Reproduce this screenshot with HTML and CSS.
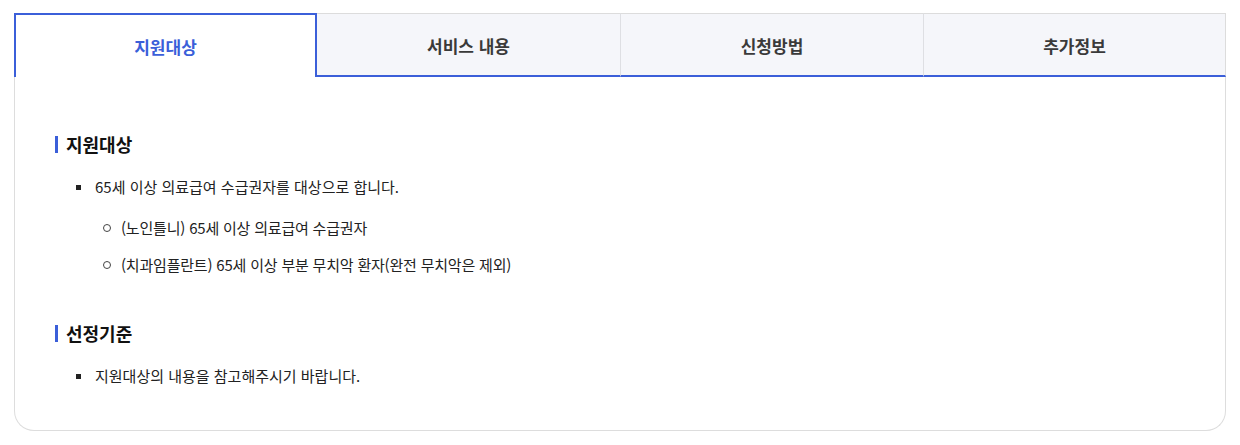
FILE: index.html
```html
<!DOCTYPE html>
<html lang="ko">
<head>
<meta charset="utf-8">
<link rel="stylesheet" href="styles.css">
</head>
<body>
<div class="wrap">
  <ul class="tabs">
    <li class="tab active">지원대상</li>
    <li class="tab">서비스 내용</li>
    <li class="tab">신청방법</li>
    <li class="tab last">추가정보</li>
  </ul>
  <div class="panel">
    <h3 class="title">지원대상</h3>
    <ul class="list">
      <li class="item">65세 이상 의료급여 수급권자를 대상으로 합니다.</li>
    </ul>
    <ul class="sublist">
      <li class="subitem">(노인틀니) 65세 이상 의료급여 수급권자</li>
      <li class="subitem">(치과임플란트) 65세 이상 부분 무치악 환자(완전 무치악은 제외)</li>
    </ul>
    <h3 class="title second">선정기준</h3>
    <ul class="list">
      <li class="item">지원대상의 내용을 참고해주시기 바랍니다.</li>
    </ul>
  </div>
</div>
</body>
</html>
```

FILE: styles.css
```css
* { box-sizing: border-box; }
html, body { margin: 0; padding: 0; background: #fff; }
body {
  font-family: "Noto Sans CJK KR", "Noto Sans", sans-serif;
  color: #222;
}
.wrap {
  padding: 13px 14px 0 14px;
  width: 1240px;
}
.tabs {
  list-style: none;
  margin: 0;
  padding: 0;
  display: grid;
  grid-template-columns: repeat(4, 1fr);
  height: 64px;
}
.tab {
  display: flex;
  align-items: center;
  justify-content: center;
  background: #f5f6fa;
  border-top: 1px solid #dcdcdc;
  border-left: 1px solid #dedfe3;
  border-bottom: 2px solid #3b5fd9;
  font-size: 17px;
  font-weight: 700;
  color: #3a3a3a;
  padding-top: 2px;
}
.tab.last { border-right: 1px solid #dcdcdc; }
.tab.active {
  background: #fff;
  border: 2px solid #3b5fd9;
  border-bottom: none;
  color: #3b5fd9;
  padding-top: 0;
}
.tab.active + .tab { border-left: none; }
.panel {
  border: 1px solid #dddddd;
  border-top: none;
  border-radius: 0 0 20px 20px;
  padding: 54px 40px 39px 40px;
  height: 354px;
}
.title {
  margin: 0;
  font-size: 18px;
  font-weight: 700;
  line-height: 26px;
  color: #111;
  display: flex;
  align-items: center;
  gap: 8px;
}
.title::before {
  content: "";
  width: 3px;
  height: 17px;
  background: #3b5fd9;
}
.title.second { margin-top: 43px; }
.list, .sublist {
  list-style: none;
  margin: 0;
  padding: 0;
}
.list { margin-top: 18px; margin-left: 21px; }
.item {
  display: flex;
  align-items: center;
  font-size: 15px;
  line-height: 24px;
  color: #222;
}
.item::before {
  content: "";
  width: 5px;
  height: 5px;
  background: #222;
  margin-right: 14px;
  flex: none;
}
.sublist { margin-top: 17px; margin-left: 48px; display: flex; flex-direction: column; gap: 13px; }
.subitem {
  display: flex;
  align-items: center;
  font-size: 15px;
  line-height: 24px;
  color: #222;
  letter-spacing: -0.2px;
}
.subitem::before {
  content: "";
  width: 6px;
  height: 6px;
  border: 1px solid #444;
  border-radius: 50%;
  margin-right: 10px;
  flex: none;
}
```
